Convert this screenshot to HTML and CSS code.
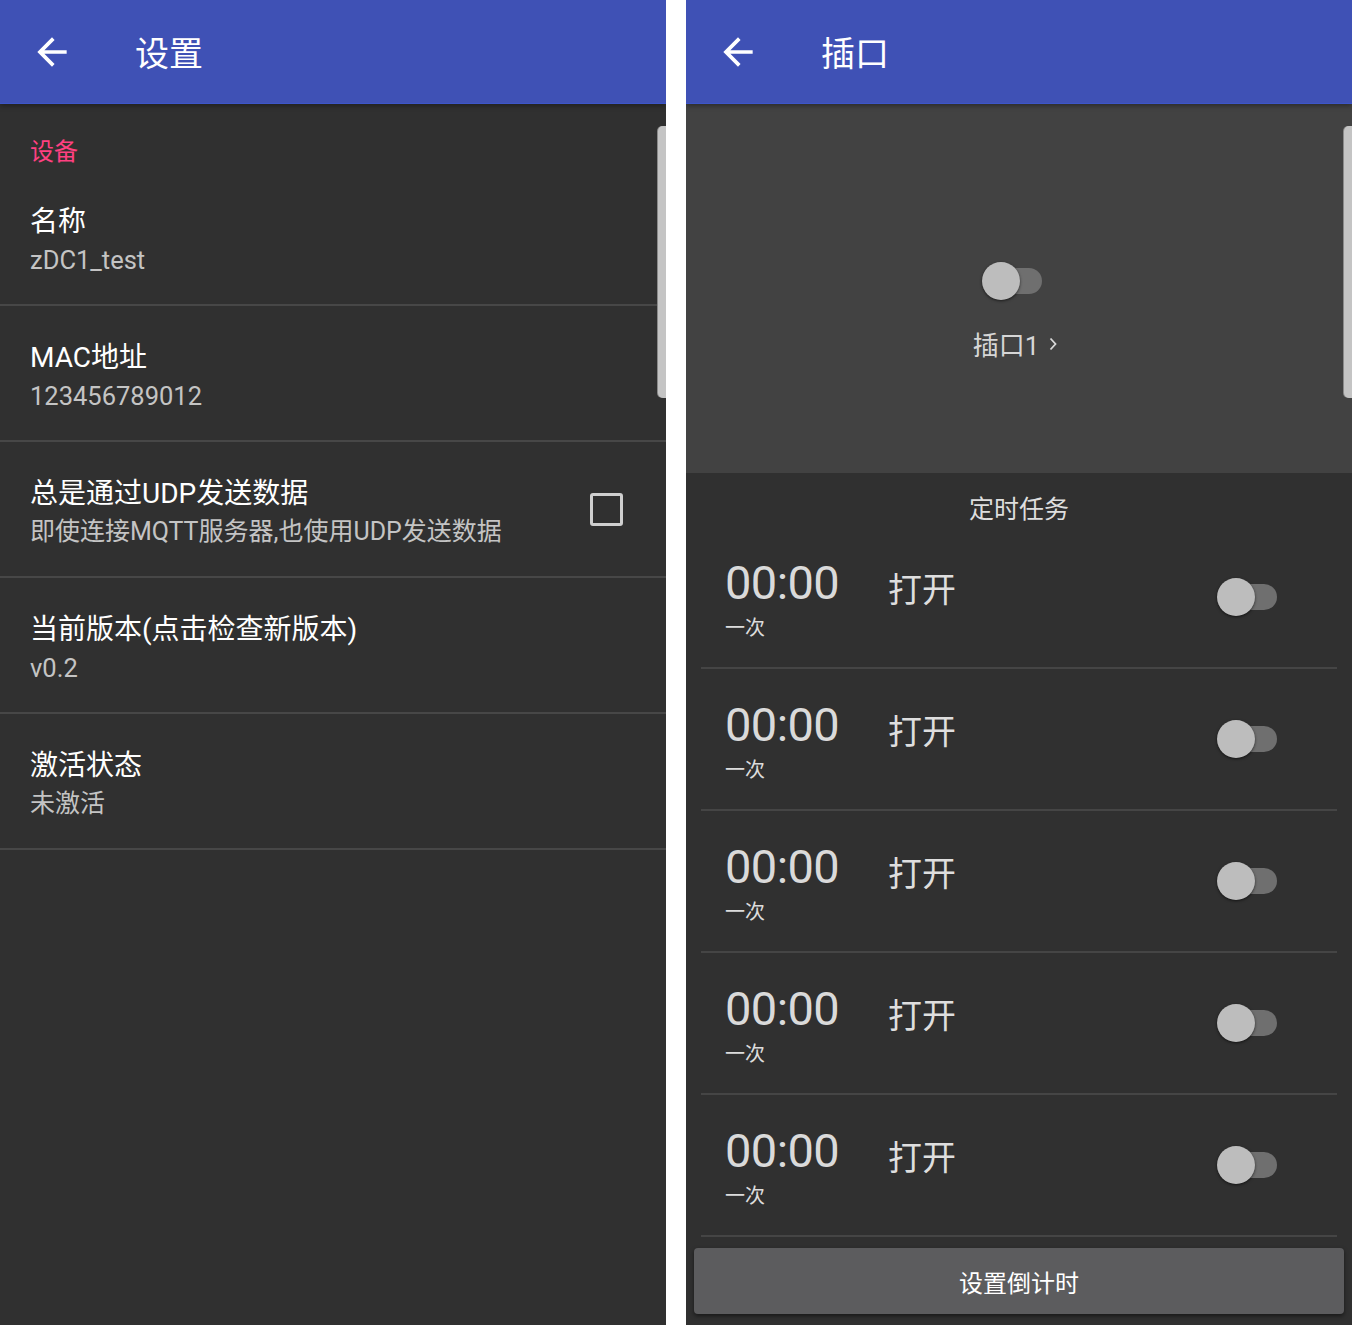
FILE: index.html
```html
<!DOCTYPE html>
<html lang="zh-CN">
<head>
<meta charset="utf-8">
<title>设置 / 插口</title>
<link rel="stylesheet" href="styles.css">
</head>
<body>
<div class="page">
  <section class="screen screen-settings">
    <header class="appbar">
      <svg class="back" viewBox="0 0 24 24" width="44" height="44"><path d="M20 11H7.83l5.59-5.59L12 4l-8 8 8 8 1.41-1.41L7.83 13H20v-2z" fill="#fff"/></svg>
      <h1 class="appbar-title">设置</h1>
    </header>
    <div class="prefs">
      <div class="pref-category">设备</div>
      <div class="pref first">
        <div class="pref-text">
          <div class="pref-title">名称</div>
          <div class="pref-summary latin">zDC1_test</div>
        </div>
      </div>
      <div class="pref">
        <div class="pref-text">
          <div class="pref-title">MAC地址</div>
          <div class="pref-summary latin">123456789012</div>
        </div>
      </div>
      <div class="pref">
        <div class="pref-text">
          <div class="pref-title">总是通过UDP发送数据</div>
          <div class="pref-summary">即使连接MQTT服务器,也使用UDP发送数据</div>
        </div>
        <div class="checkbox"></div>
      </div>
      <div class="pref">
        <div class="pref-text">
          <div class="pref-title">当前版本(点击检查新版本)</div>
          <div class="pref-summary latin">v0.2</div>
        </div>
      </div>
      <div class="pref">
        <div class="pref-text">
          <div class="pref-title">激活状态</div>
          <div class="pref-summary">未激活</div>
        </div>
      </div>
    </div>
    <div class="scrollbar"></div>
  </section>

  <div class="divider-gap"></div>

  <section class="screen screen-plug">
    <header class="appbar">
      <svg class="back" viewBox="0 0 24 24" width="44" height="44"><path d="M20 11H7.83l5.59-5.59L12 4l-8 8 8 8 1.41-1.41L7.83 13H20v-2z" fill="#fff"/></svg>
      <h1 class="appbar-title">插口</h1>
    </header>
    <div class="plug-top">
      <div class="switch switch-main"><span class="track"></span><span class="thumb"></span></div>
      <div class="plug-name">插口1<svg class="chev" viewBox="0 0 8 14" width="8" height="14"><path d="M1.5 1.5 L6.5 7 L1.5 12.5" fill="none" stroke="#d8d8d8" stroke-width="1.8"/></svg></div>
    </div>
    <div class="tasks">
      <div class="tasks-title">定时任务</div>
      <div class="task">
        <div class="task-time"><div class="time">00:00</div><div class="repeat">一次</div></div>
        <div class="task-action">打开</div>
        <div class="switch"><span class="track"></span><span class="thumb"></span></div>
      </div>
      <div class="task">
        <div class="task-time"><div class="time">00:00</div><div class="repeat">一次</div></div>
        <div class="task-action">打开</div>
        <div class="switch"><span class="track"></span><span class="thumb"></span></div>
      </div>
      <div class="task">
        <div class="task-time"><div class="time">00:00</div><div class="repeat">一次</div></div>
        <div class="task-action">打开</div>
        <div class="switch"><span class="track"></span><span class="thumb"></span></div>
      </div>
      <div class="task">
        <div class="task-time"><div class="time">00:00</div><div class="repeat">一次</div></div>
        <div class="task-action">打开</div>
        <div class="switch"><span class="track"></span><span class="thumb"></span></div>
      </div>
      <div class="task">
        <div class="task-time"><div class="time">00:00</div><div class="repeat">一次</div></div>
        <div class="task-action">打开</div>
        <div class="switch"><span class="track"></span><span class="thumb"></span></div>
      </div>
      <button class="countdown">设置倒计时</button>
    </div>
    <div class="scrollbar"></div>
  </section>
</div>
</body>
</html>
```

FILE: styles.css
```css
* { box-sizing: border-box; }
html, body { margin: 0; padding: 0; background: #fff; }
body {
  font-family: Roboto, "Noto Sans CJK SC", sans-serif;
  width: 1352px;
  height: 1325px;
  overflow: hidden;
}
.page {
  display: flex;
  width: 1352px;
  height: 1325px;
}
.divider-gap { width: 20px; background: #fff; flex: none; }
.screen {
  position: relative;
  width: 666px;
  height: 1325px;
  flex: none;
  overflow: hidden;
  background: #303030;
  display: flex;
  flex-direction: column;
}
.appbar {
  position: relative;
  z-index: 2;
  height: 104px;
  flex: none;
  background: #3F51B5;
  border-bottom: 1px solid #3D56C8;
  display: flex;
  align-items: center;
  padding-left: 30px;
  box-shadow: 0 2px 5px rgba(0,0,0,0.35);
}
.back { display: block; flex: none; margin-top: 1px; }
.appbar-title {
  margin: 4px 0 0 61px;
  font-size: 34px;
  font-weight: 400;
  color: #fff;
  line-height: 40px;
}

/* settings list */
.prefs { display: flex; flex-direction: column; }
.pref-category {
  height: 66px;
  padding: 34px 0 0 30px;
  font-size: 24px;
  line-height: 28px;
  color: #FF4081;
}
.pref {
  height: 136px;
  border-bottom: 2px solid #474747;
  display: flex;
  align-items: center;
  padding: 8px 43px 0 30px;
}
.pref-text { flex: 1; }
.pref-title {
  font-size: 28px;
  line-height: 38px;
  color: #fff;
}
.pref-summary {
  font-size: 25px;
  line-height: 38px;
  color: #c4c4c4;
}
.pref-summary.latin { font-size: 25.5px; }
.checkbox {
  width: 33px;
  height: 33px;
  border: 3px solid #cfcfcf;
  border-radius: 3px;
  margin-top: -8px;
  flex: none;
}
.scrollbar {
  position: absolute;
  top: 126px;
  right: 0;
  width: 8px;
  height: 272px;
  background: #c4c4c4;
  border-radius: 5px 0 0 5px;
  box-shadow: -1px 0 0 #8a8a8a;
}

/* plug screen */
.plug-top {
  height: 369px;
  flex: none;
  background: #424242;
  display: flex;
  flex-direction: column;
  align-items: center;
  padding-top: 158px;
}
.switch {
  position: relative;
  width: 60px;
  height: 38px;
  flex: none;
}
.switch .track {
  position: absolute;
  left: 6px;
  right: 0;
  top: 6px;
  height: 26px;
  border-radius: 13px;
  background: #6f6f6f;
}
.switch .thumb {
  position: absolute;
  left: 0;
  top: 0;
  width: 38px;
  height: 38px;
  border-radius: 50%;
  background: #bdbdbd;
  box-shadow: 0 1px 3px rgba(0,0,0,0.6);
}
.switch-main { margin-right: 14px; }
.plug-name {
  margin-top: 29px;
  font-size: 26px;
  line-height: 34px;
  color: #d6d6d6;
  display: flex;
  align-items: center;
  margin-left: -8px;
}
.chev { margin-left: 10px; margin-top: -4px; }

.tasks {
  flex: 1;
  display: flex;
  flex-direction: column;
}
.tasks-title {
  height: 54px;
  padding-top: 19px;
  text-align: center;
  font-size: 25px;
  line-height: 36px;
  color: #dedede;
}
.task {
  height: 142px;
  margin: 0 15px;
  border-bottom: 2px solid #454545;
  display: flex;
  align-items: flex-start;
  padding-left: 24px;
}
.task-time {
  width: 163px;
  flex: none;
  padding-top: 30px;
}
.time {
  font-size: 47px;
  line-height: 52px;
  color: #dadada;
  letter-spacing: -0.6px;
}
.repeat {
  font-size: 20px;
  line-height: 38px;
  color: #dcdcdc;
}
.task-action {
  flex: 1;
  margin-top: 43px;
  font-size: 34px;
  line-height: 40px;
  color: #dedede;
}
.task .switch {
  margin-top: 51px;
  margin-right: 60px;
}
.countdown {
  margin: 11px 8px 0 8px;
  height: 66px;
  border: none;
  border-radius: 4px;
  background: #5c5c5e;
  box-shadow: 0 2px 4px rgba(0,0,0,0.5);
  font-family: Roboto, "Noto Sans CJK SC", sans-serif;
  font-size: 24px;
  color: #fff;
  padding: 0;
}
```
